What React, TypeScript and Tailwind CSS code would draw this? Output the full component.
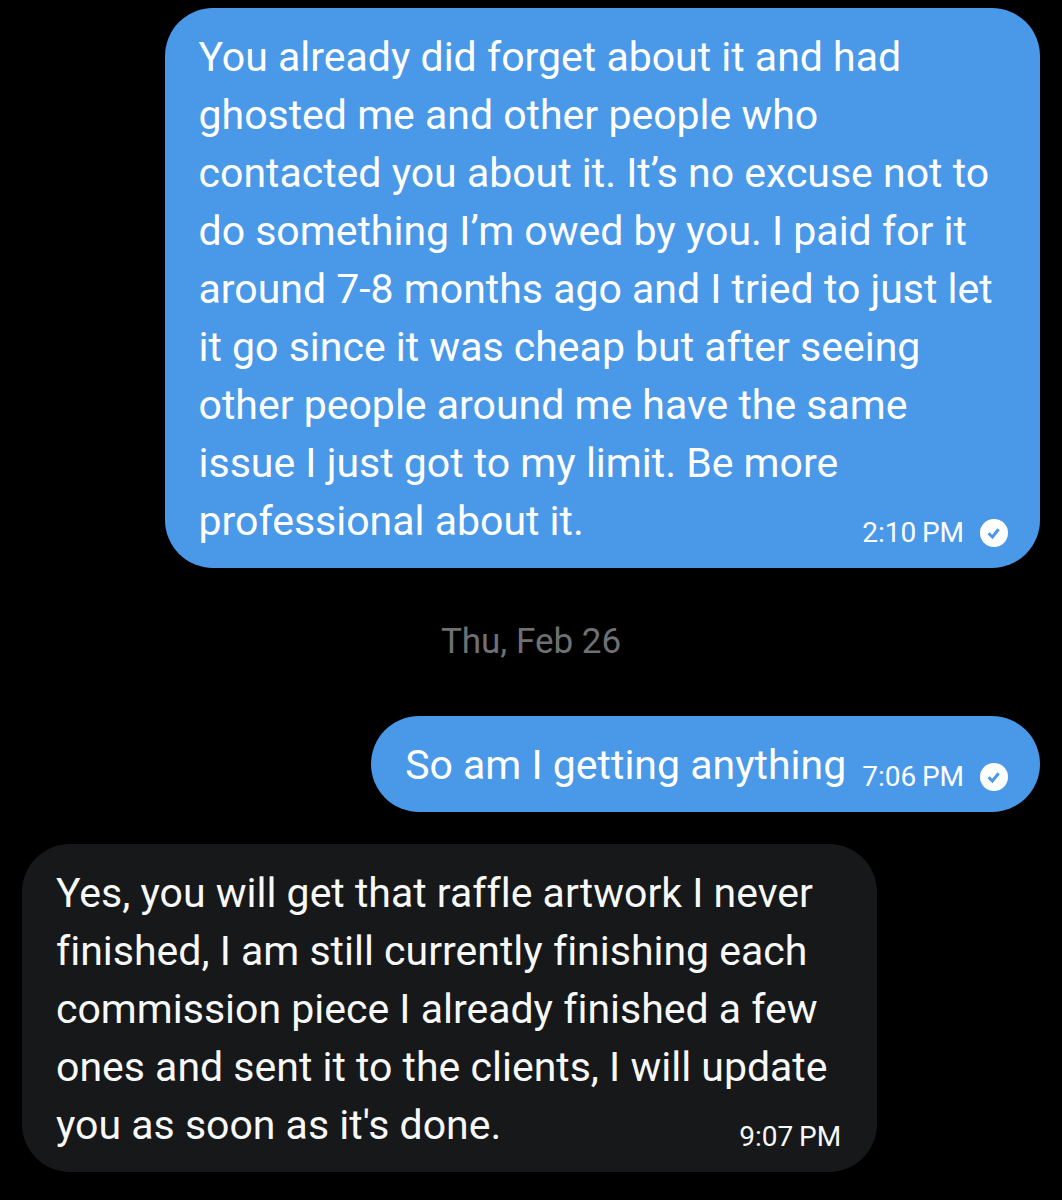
import { clsx } from "clsx";

interface Message {
  id: number;
  text: string;
  time: string;
  outgoing?: boolean;
}

const EARLIER: Message[] = [
  {
    id: 1,
    text: "You already did forget about it and had ghosted me and other people who contacted you about it. It’s no excuse not to do something I’m owed by you. I paid for it around 7-8 months ago and I tried to just let it go since it was cheap but after seeing other people around me have the same issue I just got to my limit. Be more professional about it.",
    time: "2:10\u2009PM",
    outgoing: true,
  },
];

const FEB_26: Message[] = [
  { id: 2, text: "So am I getting anything", time: "7:06\u2009PM", outgoing: true },
  {
    id: 3,
    text: "Yes, you will get that raffle artwork I never finished, I am still currently finishing each commission piece I already finished a few ones and sent it to the clients, I will update you as soon as it's done.",
    time: "9:07\u2009PM",
  },
];

function SentIcon() {
  return (
    <svg viewBox="0 0 28 28" role="img" aria-label="Sent" className="size-7 shrink-0">
      <circle cx="14" cy="14" r="14" fill="white" />
      <path d="M8.6 14.3l3.8 3.7 6.2-7.8" fill="none" stroke="#4a99e9" strokeWidth="3" />
    </svg>
  );
}

function Bubble({ text, time, outgoing }: Message) {
  return (
    <li
      className={clsx(
        "w-fit rounded-[48px] pt-5 pr-9 pb-[18px] pl-[34px]",
        outgoing ? "max-w-[86%] self-end bg-[#4a99e9] text-white" : "max-w-[84%] self-start bg-[#17181a] text-[#f7f8f8]",
      )}
    >
      <p className="text-[41px] leading-[58px] [font-variant-ligatures:none]">
        {text}
        {/* sits at the end of the last line */}
        <span
          className={clsx(
            "float-right mt-6 ml-4 flex h-[34px] items-center gap-4 text-[28px] leading-[34px]",
            outgoing && "-mr-1",
          )}
        >
          <time>{time}</time>
          {outgoing && <SentIcon />}
        </span>
      </p>
    </li>
  );
}

function MessageList({ messages }: { messages: Message[] }) {
  return (
    <ul className="flex flex-col gap-8">
      {messages.map((message) => (
        <Bubble key={message.id} {...message} />
      ))}
    </ul>
  );
}

export default function App() {
  return (
    <main className="min-h-screen bg-black px-[22px] pt-2 pb-7 font-['Roboto',sans-serif]">
      <MessageList messages={EARLIER} />
      <h2 className="py-[53px] text-center text-[35px] leading-[42px] font-normal text-[#6e7073]">Thu, Feb 26</h2>
      <MessageList messages={FEB_26} />
    </main>
  );
}
